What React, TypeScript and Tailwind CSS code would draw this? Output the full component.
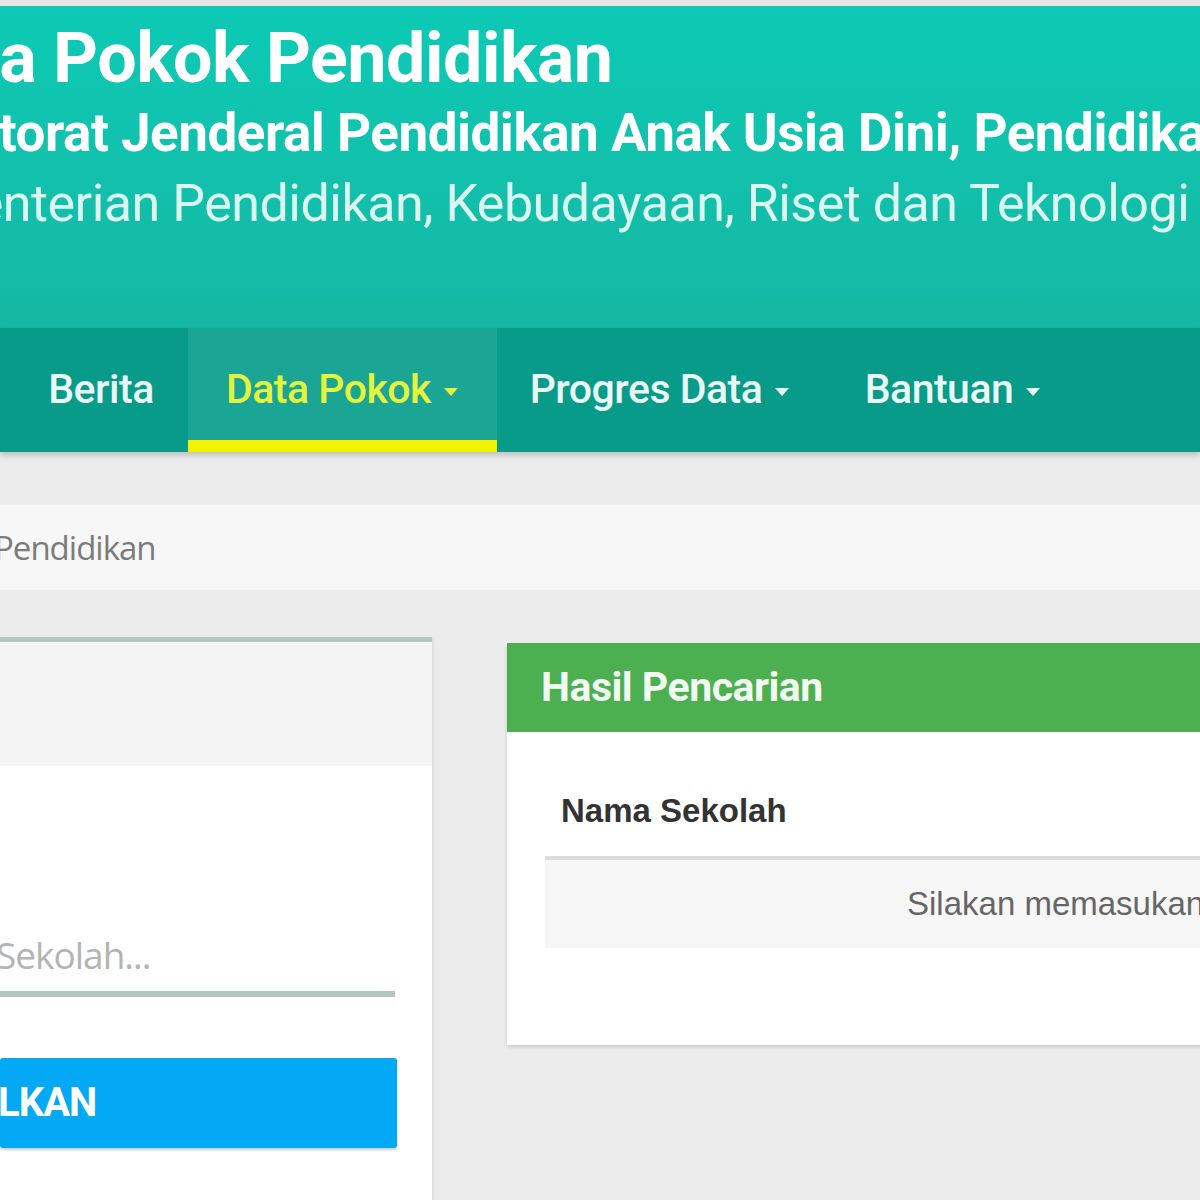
import { ReactNode } from 'react';

function Caret({ color }: { color: string }) {
  return (
    <svg width="16" height="10" viewBox="0 0 16 10" className="ml-[12px] mt-[4px]">
      <path d="M1 1 L15 1 L8 9 Z" fill={color} />
    </svg>
  );
}

function NavItem({ label, width, active, dropdown }: { label: string; width: string; active?: boolean; dropdown?: boolean }) {
  return (
    <div className={`relative flex h-full items-center justify-center ${width} ${active ? 'bg-[#1ba594]' : ''}`}>
      <span className={`text-[41px] font-medium tracking-[-0.5px] ${active ? 'text-[#e4f43c]' : 'text-[#eaf7f4]'}`}>{label}</span>
      {dropdown && <Caret color={active ? '#e4f43c' : '#eaf7f4'} />}
      {active && <div className="absolute bottom-0 left-0 right-0 h-[12px] bg-[#f2f300]" />}
    </div>
  );
}

function Card({ children, className }: { children: ReactNode; className?: string }) {
  return <div className={`bg-white shadow-[0_2px_4px_rgba(0,0,0,0.15)] ${className ?? ''}`}>{children}</div>;
}

export default function App() {
  return (
    <div className="w-[1200px] h-[1200px] overflow-hidden bg-[#ececec] font-['Roboto',sans-serif]">
      <div className="h-[6px] bg-[#e8e3e3]" />

      {/* site header */}
      <header className="h-[322px] bg-gradient-to-b from-[#0ccab5] to-[#15b8a3] pt-[17px] text-white whitespace-nowrap">
        <h1 className="ml-[-106px] text-[70px] font-bold leading-none tracking-[-0.5px]">Data Pokok Pendidikan</h1>
        <p className="ml-[-123px] mt-[14px] text-[53px] font-bold leading-none tracking-[-0.5px]">
          Direktorat Jenderal Pendidikan Anak Usia Dini, Pendidikan Dasar, dan Pendidikan Menengah
        </p>
        <p className="ml-[-128px] mt-[18px] text-[52px] leading-none tracking-[-0.5px] text-[#dbf5ef]">
          Kementerian Pendidikan, Kebudayaan, Riset dan Teknologi
        </p>
      </header>

      {/* main navigation */}
      <nav className="relative h-[124px] bg-[#089b89] pl-[14px] flex items-stretch shadow-[0_3px_6px_rgba(0,0,0,0.2)]">
        <NavItem label="Berita" width="w-[174px]" />
        <NavItem label="Data Pokok" width="w-[309px]" active dropdown />
        <NavItem label="Progres Data" width="w-[326px]" dropdown />
        <NavItem label="Bantuan" width="w-[260px]" dropdown />
      </nav>

      {/* breadcrumb */}
      <div className="mt-[53px] h-[85px] bg-[#f7f7f7] flex items-center">
        <span className="ml-[-6px] text-[33px] text-[#7b7b7b] font-['Open_Sans',sans-serif] tracking-[-1px]">Pendidikan</span>
      </div>

      <div className="mt-[47px] flex items-start gap-[75px]">
        {/* search form */}
        <Card className="w-[432px] h-[600px] shrink-0 border-t-[5px] border-[#b3c7c3]">
          <div className="h-[124px] bg-[#f4f4f4]" />
          <div className="pr-[37px] pt-[152px]">
            <input
              readOnly
              placeholder="Sekolah..."
              className="ml-[-4px] w-[399px] h-[79px] border-b-[6px] border-[#b3c6c2] bg-transparent text-[37px] outline-none placeholder:text-[#b4b4b4] font-['Open_Sans',sans-serif] tracking-[-1px]"
            />
            <button className="mt-[61px] w-[397px] h-[90px] rounded-[3px] bg-[#03a9f4] shadow-[0_2px_3px_rgba(0,0,0,0.2)] flex items-center overflow-hidden">
              <span className="ml-[-119px] whitespace-nowrap text-[40px] font-bold text-white tracking-[-1px]">TAMPILKAN</span>
            </button>
          </div>
        </Card>

        {/* results */}
        <Card className="mt-[6px] w-[760px] h-[402px] shrink-0">
          <div className="h-[89px] bg-[#4caf50] px-[34px] flex items-center">
            <h2 className="text-[41px] font-bold text-[#f2fbf2] tracking-[-0.5px]">Hasil Pencarian</h2>
          </div>
          <div className="px-[38px] pt-[33px]">
            <div className="h-[95px] flex items-center pl-[16px] border-b-[4px] border-[#dcdcdc]">
              <span className="text-[33px] font-bold text-[#333] font-['Liberation_Sans',sans-serif]">Nama Sekolah</span>
            </div>
            <div className="h-[88px] bg-[#f6f6f6] flex items-center pl-[362px]">
              <span className="whitespace-nowrap text-[33px] text-[#666] font-['Liberation_Sans',sans-serif]">Silakan memasukan kata kunci pencarian</span>
            </div>
          </div>
        </Card>
      </div>
    </div>
  );
}
